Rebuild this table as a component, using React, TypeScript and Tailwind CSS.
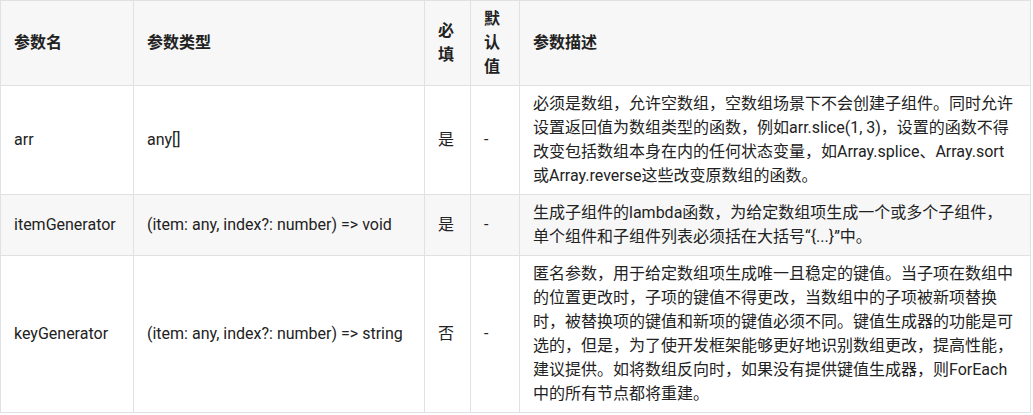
import React from "react";

const rows = [
  {
    name: "arr",
    type: "any[]",
    req: "是",
    def: "-",
    desc: "必须是数组，允许空数组，空数组场景下不会创建子组件。同时允许设置返回值为数组类型的函数，例如arr.slice(1, 3)，设置的函数不得改变包括数组本身在内的任何状态变量，如Array.splice、Array.sort或Array.reverse这些改变原数组的函数。",
  },
  {
    name: "itemGenerator",
    type: "(item: any, index?: number) => void",
    req: "是",
    def: "-",
    desc: "生成子组件的lambda函数，为给定数组项生成一个或多个子组件，单个组件和子组件列表必须括在大括号“{...}”中。",
  },
  {
    name: "keyGenerator",
    type: "(item: any, index?: number) => string",
    req: "否",
    def: "-",
    desc: "匿名参数，用于给定数组项生成唯一且稳定的键值。当子项在数组中的位置更改时，子项的键值不得更改，当数组中的子项被新项替换时，被替换项的键值和新项的键值必须不同。键值生成器的功能是可选的，但是，为了使开发框架能够更好地识别数组更改，提高性能，建议提供。如将数组反向时，如果没有提供键值生成器，则ForEach中的所有节点都将重建。",
  },
];

const cell =
  "border border-[#dfe1e5] px-[13px] py-[6px] align-middle text-left";

export default function App() {
  return (
    <div
      className="bg-white w-[1033px] h-[415px] text-[16px] leading-[24px] text-[#222222]"
      style={{ fontFamily: 'Roboto, "Noto Sans CJK SC", sans-serif' }}
    >
      <table className="table-fixed border-collapse w-[1031px]">
        <colgroup>
          <col className="w-[133px]" />
          <col className="w-[291px]" />
          <col className="w-[46px]" />
          <col className="w-[49px]" />
          <col />
        </colgroup>
        <thead>
          <tr className="bg-[#f7f7f7] h-[85px]">
            <th className={`${cell} font-bold`}>参数名</th>
            <th className={`${cell} font-bold`}>参数类型</th>
            <th className={`${cell} font-bold`}>必填</th>
            <th className={`${cell} font-bold`}>默认值</th>
            <th className={`${cell} font-bold`}>参数描述</th>
          </tr>
        </thead>
        <tbody>
          {rows.map((r, i) => (
            <tr key={r.name} className={i % 2 === 1 ? "bg-[#f7f7f7]" : "bg-white"}>
              <td className={cell}>{r.name}</td>
              <td className={cell}>{r.type}</td>
              <td className={cell}>{r.req}</td>
              <td className={cell}>{r.def}</td>
              <td className={cell}>{r.desc}</td>
            </tr>
          ))}
        </tbody>
      </table>
    </div>
  );
}
